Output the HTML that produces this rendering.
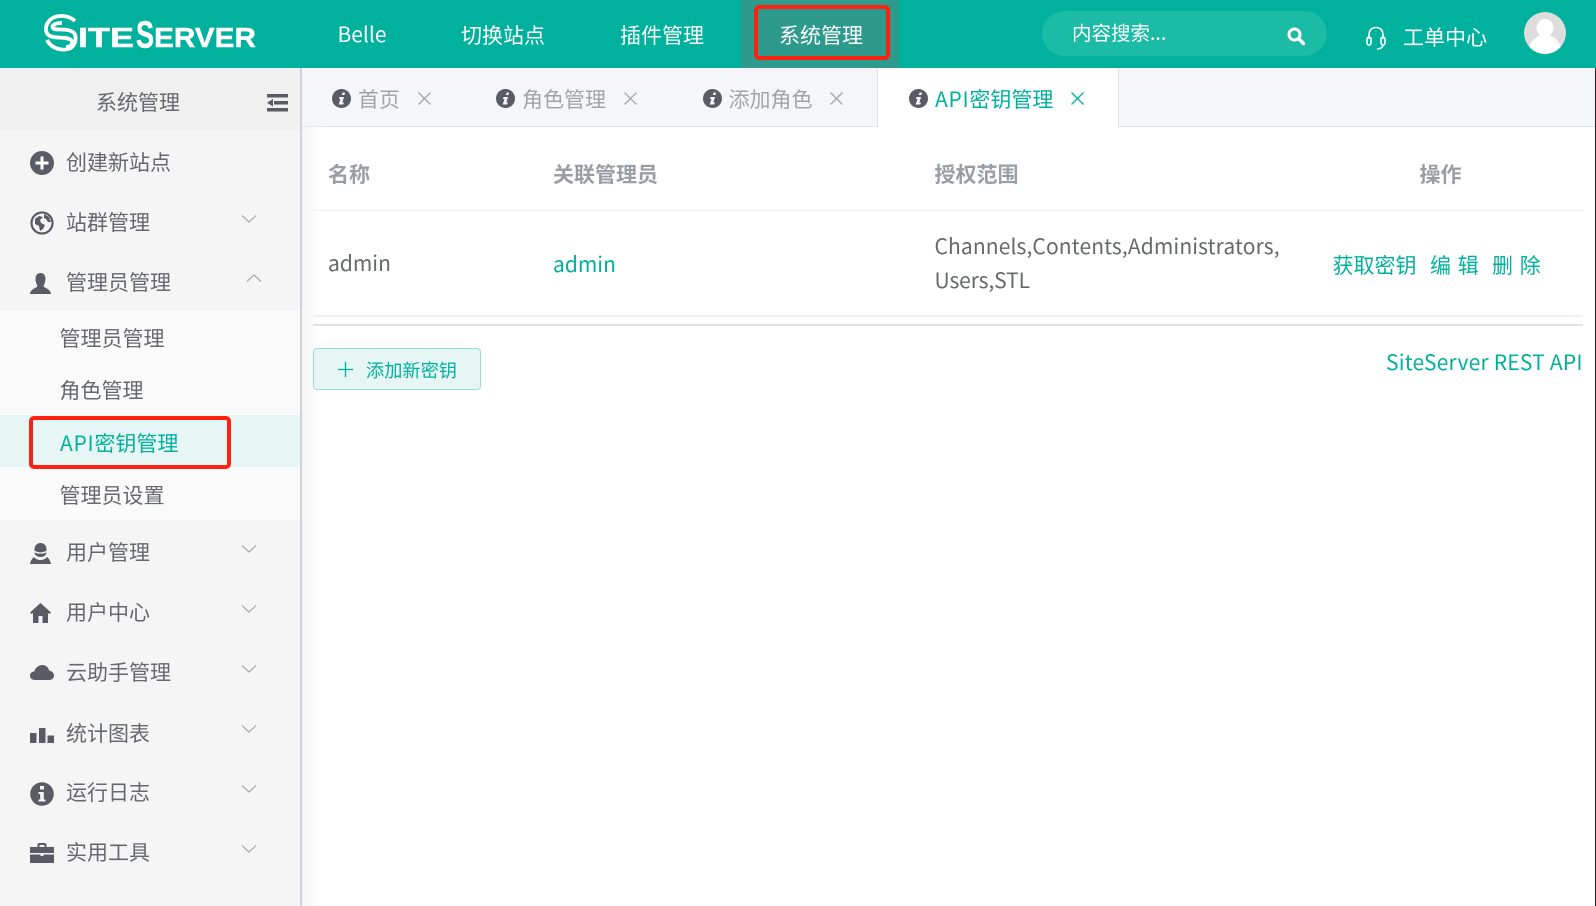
<!DOCTYPE html>
<html lang="zh"><head><meta charset="utf-8"><title>SiteServer</title>
<style>
*{box-sizing:border-box}
html,body{margin:0;padding:0;width:1596px;height:906px;overflow:hidden;background:#fff}
body{position:relative;font-family:"Liberation Sans","Noto Sans CJK SC",sans-serif}
.b{position:absolute}
.t{position:absolute;white-space:nowrap;line-height:30px;height:30px;font-size:21px;color:#66686e;font-family:"Noto Sans CJK SC",sans-serif}
.w{color:#fff}.g{color:#00b19d}.m{color:#a2a3a8}
.h{font-weight:700;font-size:21px;color:#9b9da5}
.a{letter-spacing:.7px}
svg{position:absolute;overflow:visible}
.ic{fill:#5a5b64}
.ch{fill:none;stroke:#ababab;stroke-width:1.2}
.x{fill:none;stroke:#a5a5a8;stroke-width:1.3}
</style></head><body>
<div class="b" style="left:0;top:0;width:1596px;height:68px;background:#00b19d"></div>
<div class="b" style="left:741px;top:0;width:158px;height:68px;background:#2d9a8c"></div>
<svg style="left:0;top:0" width="300" height="68">
<path d="M75 21C69 15 56 14 50 20C45 25 44 33 50 36C56 39 66 36 71 40C74 43 71 47 66 47" fill="none" stroke="#fff" stroke-width="3.800"/>
<path d="M47 40C52 50 66 52 72 47C77 42 77 33 71 31C65 28 56 31 53 28C51 25 56 23 62 23" fill="none" stroke="#fff" stroke-width="3.800"/>
<text x="78" y="47" font-family="Liberation Sans" font-weight="700" font-size="28" fill="#fff" stroke="#fff" stroke-width=".4" textLength="56" lengthAdjust="spacingAndGlyphs">ITE</text>
<text x="136" y="47.5" font-family="Liberation Sans" font-weight="700" font-size="38" fill="#fff" stroke="#fff" stroke-width=".5" textLength="18" lengthAdjust="spacingAndGlyphs">S</text>
<text x="154" y="47" font-family="Liberation Sans" font-weight="700" font-size="28" fill="#fff" stroke="#fff" stroke-width=".4" textLength="102" lengthAdjust="spacingAndGlyphs">ERVER</text>
</svg>
<div class="t w" style="left:337.500px;top:19px">Belle</div>
<div class="t w" style="left:461px;top:19.500px">切换站点</div>
<div class="t w" style="left:620px;top:19.500px">插件管理</div>
<div class="t w" style="left:779px;top:19.500px">系统管理</div>
<div class="b" style="left:754px;top:5px;width:136px;height:55px;border:4.500px solid #ff2110;border-radius:5px"></div>
<div class="b" style="left:1042px;top:11px;width:285px;height:45px;border-radius:23px;background:#1cbba6"></div>
<div class="t w" style="left:1072px;top:17px;font-size:19.500px">内容搜索...</div>
<svg style="left:1287px;top:27px" width="18" height="18"><circle cx="7.500" cy="7.500" r="5.500" fill="none" stroke="#fff" stroke-width="3"/><path d="M11.500 11.500L16.500 16.500" stroke="#fff" stroke-width="3.400" stroke-linecap="round"/></svg>
<svg style="left:1365px;top:26px" width="22" height="24" fill="none" stroke="#fff" stroke-width="1.600"><path d="M4 13V9C4 4.500 6.500 1.500 11 1.500S18 4.500 18 9V13"/><rect x="2" y="11" width="4" height="8" rx="2"/><rect x="16" y="11" width="4" height="8" rx="2"/><path d="M18 19C18 21.500 15 23 12 23"/></svg>
<div class="t w" style="left:1403px;top:22px">工单中心</div>
<svg style="left:1524px;top:12px" width="42" height="42"><defs><clipPath id="av"><circle cx="21" cy="21" r="21"/></clipPath></defs><circle cx="21" cy="21" r="21" fill="#ddd"/><g clip-path="url(#av)" fill="#fff"><ellipse cx="21" cy="16" rx="8.500" ry="9"/><ellipse cx="21" cy="38" rx="16" ry="15"/></g></svg>

<div class="b" style="left:0;top:68px;width:300px;height:838px;background:#f5f5f5"></div>
<div class="b" style="left:300px;top:68px;width:1.500px;height:838px;background:#d2d2dc"></div>
<div class="b" style="left:302px;top:126px;width:20px;height:780px;background:linear-gradient(90deg,#f5f5f5,#fff)"></div>
<div class="b" style="left:0;top:68px;width:300px;height:62px;background:#f0f0f0"></div>
<div class="t" style="left:96px;top:87px">系统管理</div>
<svg style="left:267px;top:94px" width="22" height="18" class="ic"><rect x="0" y="0" width="21" height="3.500"/><rect x="0" y="14" width="21" height="3.500"/><rect x="7" y="7" width="14" height="3.500"/><path d="M0 8.800L6 5V12.500Z"/></svg>

<div class="b" style="left:0;top:310px;width:300px;height:210px;background:#fafafa"></div>
<div class="b" style="left:0;top:415px;width:300px;height:52px;background:#e6f6f4"></div>

<svg style="left:30px;top:151px" width="24" height="24"><circle cx="12" cy="12" r="12" class="ic"/><path d="M12 5.500V18.500M5.500 12H18.500" stroke="#fff" stroke-width="3"/></svg>
<div class="t" style="left:66px;top:147px">创建新站点</div>

<svg style="left:30px;top:211px" width="24" height="24"><circle cx="12" cy="12" r="10.500" fill="none" stroke="#5a5b64" stroke-width="2.200"/><path class="ic" d="M5 8L9 5L13 6L10 9L11 12L15 14L13 18L10 20L9 15L5 13ZM14 3L19 6L21 11L18 11L16 8L14 7Z"/></svg>
<div class="t" style="left:66px;top:207px">站群管理</div>
<svg style="left:242px;top:215px" width="14" height="8"><path class="ch" d="M0 0.500L7 7L14 0.500"/></svg>

<svg style="left:30px;top:273px" width="21" height="21"><path class="ic" d="M10.500 0C6.800 0 5.500 3 5.500 6C5.500 9 7 12 7.500 13C7 15 0.500 15.500 0 21H21C20.500 15.500 14 15 13.500 13C14 12 15.500 9 15.500 6C15.500 3 14.200 0 10.500 0Z"/></svg>
<div class="t" style="left:66px;top:267px">管理员管理</div>
<svg style="left:247px;top:274px" width="14" height="8"><path class="ch" d="M0 7.500L7 1L14 7.500"/></svg>

<div class="t" style="left:59.500px;top:323px">管理员管理</div>
<div class="t" style="left:59.500px;top:375px">角色管理</div>
<div class="t g" style="left:60px;top:428px"><span class="a">API</span>密钥管理</div>
<div class="t" style="left:59.500px;top:480px">管理员设置</div>
<div class="b" style="left:29px;top:416px;width:202px;height:53px;border:4.500px solid #ff2110;border-radius:5px"></div>

<svg style="left:30px;top:543px" width="21" height="21"><path class="ic" d="M10.500 0C6.500 0 4.500 3 4.500 6.500V9C4.500 12 7 14 10.500 14S16.500 12 16.500 9V6.500C16.500 3 14.500 0 10.500 0ZM4 14C2 15.500 0.500 18 0 21H21C20.500 18 19 15.500 17 14C15.500 16 13 17 10.500 17S5.500 16 4 14Z"/><path d="M4.500 8.500C8 10.500 13 10.500 16.500 8.500" stroke="#f5f5f5" stroke-width="1.300" fill="none"/></svg>
<div class="t" style="left:66px;top:537px">用户管理</div>
<svg style="left:242px;top:545px" width="14" height="8"><path class="ch" d="M0 0.500L7 7L14 0.500"/></svg>

<svg style="left:30px;top:603px" width="21" height="20"><path class="ic" d="M10.500 0L21 9.500L19.500 11L18 10V20H12.500V13H8.500V20H3V10L1.500 11L0 9.500Z"/></svg>
<div class="t" style="left:66px;top:597px">用户中心</div>
<svg style="left:242px;top:605px" width="14" height="8"><path class="ch" d="M0 0.500L7 7L14 0.500"/></svg>

<svg style="left:30px;top:665px" width="24" height="15"><path class="ic" d="M5 15C2 15 0 13 0 10.500C0 8 2 6.500 4.500 6.500C5 3 8.500 0 12.500 0C16 0 18.500 2.500 19 5.500C22 6 24 8 24 10.500C24 13 22 15 19 15Z"/></svg>
<div class="t" style="left:66px;top:657px">云助手管理</div>
<svg style="left:242px;top:665px" width="14" height="8"><path class="ch" d="M0 0.500L7 7L14 0.500"/></svg>

<svg style="left:30px;top:728px" width="24" height="15" class="ic"><rect x="0" y="5" width="6.500" height="10"/><rect x="9" y="0" width="6.500" height="15"/><rect x="17.500" y="7.500" width="6.500" height="7.500"/></svg>
<div class="t" style="left:66px;top:717.500px">统计图表</div>
<svg style="left:242px;top:725px" width="14" height="8"><path class="ch" d="M0 0.500L7 7L14 0.500"/></svg>

<svg style="left:30px;top:782px" width="24" height="24"><circle cx="12" cy="12" r="11.800" class="ic"/><rect x="10" y="4" width="4" height="3.500" fill="#f5f5f5"/><path d="M8.500 10H13.800V17.500H15.500V19.500H8.500V17.500H10.200V12H8.500Z" fill="#f5f5f5"/></svg>
<div class="t" style="left:66px;top:777px">运行日志</div>
<svg style="left:242px;top:785px" width="14" height="8"><path class="ch" d="M0 0.500L7 7L14 0.500"/></svg>

<svg style="left:30px;top:843px" width="24" height="20"><path class="ic" d="M7.500 4V2C7.500 0.800 8.300 0 9.500 0H14.500C15.700 0 16.500 0.800 16.500 2V4H24V10H0V4ZM9.500 2V4H14.500V2ZM0 11.500H10.500V13H13.500V11.500H24V20H0Z"/></svg>
<div class="t" style="left:66px;top:837px">实用工具</div>
<svg style="left:242px;top:845px" width="14" height="8"><path class="ch" d="M0 0.500L7 7L14 0.500"/></svg>

<div class="b" style="left:302px;top:68px;width:1293px;height:59px;background:#f5f6fa;border-bottom:1px solid #e2e4e9"></div>
<div class="b" style="left:877px;top:68px;width:242px;height:60px;background:#fff;border-left:1px solid #dfe1e6;border-right:1px solid #dfe1e6"></div>
<div class="b" style="left:1595px;top:68px;width:1px;height:838px;background:#222"></div>

<svg style="left:332px;top:89px" width="19" height="19"><circle cx="9.500" cy="9.500" r="9.500" class="ic"/><path d="M10.500 3.500H13L12.500 6H10ZM7.500 8H12L10.300 13.500H12L11.200 15.500H6.700L8.500 10H7Z" fill="#f5f6fa"/></svg>
<div class="t m" style="left:358px;top:84px">首页</div>
<svg style="left:418px;top:92px" width="13" height="13"><path class="x" d="M0.500 0.500L12.500 12.500M12.500 0.500L0.500 12.500"/></svg>

<svg style="left:496px;top:89px" width="19" height="19"><circle cx="9.500" cy="9.500" r="9.500" class="ic"/><path d="M10.500 3.500H13L12.500 6H10ZM7.500 8H12L10.300 13.500H12L11.200 15.500H6.700L8.500 10H7Z" fill="#f5f6fa"/></svg>
<div class="t m" style="left:522px;top:84px">角色管理</div>
<svg style="left:624px;top:92px" width="13" height="13"><path class="x" d="M0.500 0.500L12.500 12.500M12.500 0.500L0.500 12.500"/></svg>

<svg style="left:703px;top:89px" width="19" height="19"><circle cx="9.500" cy="9.500" r="9.500" class="ic"/><path d="M10.500 3.500H13L12.500 6H10ZM7.500 8H12L10.300 13.500H12L11.200 15.500H6.700L8.500 10H7Z" fill="#f5f6fa"/></svg>
<div class="t m" style="left:728.500px;top:84px">添加角色</div>
<svg style="left:830px;top:92px" width="13" height="13"><path class="x" d="M0.500 0.500L12.500 12.500M12.500 0.500L0.500 12.500"/></svg>

<svg style="left:909px;top:89px" width="19" height="19"><circle cx="9.500" cy="9.500" r="9.500" class="ic"/><path d="M10.500 3.500H13L12.500 6H10ZM7.500 8H12L10.300 13.500H12L11.200 15.500H6.700L8.500 10H7Z" fill="#fff"/></svg>
<div class="t g" style="left:935px;top:84px"><span class="a">API</span>密钥管理</div>
<svg style="left:1071px;top:92px" width="13" height="13"><path d="M0.500 0.500L12.500 12.500M12.500 0.500L0.500 12.500" fill="none" stroke="#00b19d" stroke-width="1.300"/></svg>

<div class="t h" style="left:328px;top:159px">名称</div>
<div class="t h" style="left:553px;top:159px">关联管理员</div>
<div class="t h" style="left:934.500px;top:159px">授权范围</div>
<div class="t h" style="left:1419.500px;top:159px">操作</div>
<div class="b" style="left:313px;top:210px;width:1270px;height:1px;background:#eeeff4"></div>
<div class="t" style="left:328px;top:248px">admin</div>
<div class="t g" style="left:553px;top:249px">admin</div>
<div class="t" style="left:934.500px;top:231px;letter-spacing:.12px">Channels,Contents,Administrators,</div>
<div class="t" style="left:934.500px;top:265px;letter-spacing:-.1px">Users,STL</div>
<div class="t g" style="left:1332.500px;top:250px">获取密钥</div>
<div class="t g" style="left:1430px;top:250px;word-spacing:2px">编 辑</div>
<div class="t g" style="left:1492px;top:250px;word-spacing:2px">删 除</div>
<div class="b" style="left:313px;top:315px;width:1270px;height:2px;background:#eef0f5"></div>
<div class="b" style="left:313px;top:324px;width:1270px;height:2px;background:#dfe2e6"></div>
<div class="b" style="left:313px;top:348px;width:168px;height:42px;background:#e6f6f4;border:1px solid #96e0d6;border-radius:4px"></div>
<svg style="left:338px;top:362px" width="15" height="15"><path d="M7.500 0V15M0 7.500H15" stroke="#00b19d" stroke-width="1.300"/></svg>
<div class="t g" style="left:366px;top:354.500px;font-size:18.200px">添加新密钥</div>
<div class="t g" style="left:1386px;top:347px;letter-spacing:.22px">SiteServer REST API</div>
</body></html>
